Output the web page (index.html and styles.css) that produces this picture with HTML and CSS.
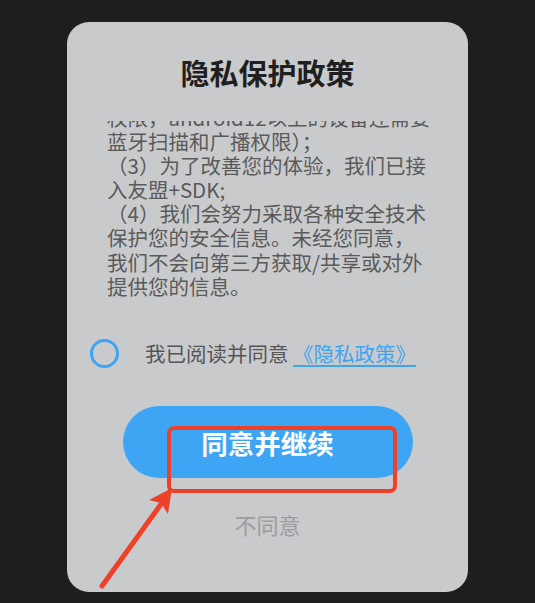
FILE: index.html
```html
<!DOCTYPE html>
<html lang="zh-CN">
<head>
<meta charset="utf-8">
<title>隐私保护政策</title>
<link rel="stylesheet" href="styles.css">
</head>
<body>
<div class="screen">
  <div class="card">
    <h1 class="title">隐私保护政策</h1>
    <div class="policy-scroll">
      <div class="policy-text">
        <p>权限，android12以上的设备还需要<br>蓝牙扫描和广播权限）；</p>
        <p>（3）为了改善您的体验，我们已接<br>入友盟+SDK;</p>
        <p>（4）我们会努力采取各种安全技术<br>保护您的安全信息。未经您同意，<br>我们不会向第三方获取/共享或对外<br>提供您的信息。</p>
      </div>
    </div>
    <div class="agree-row">
      <span class="check"></span>
      <span class="agree-label">我已阅读并同意 <a class="agree-link" href="#">《隐私政策》</a></span>
    </div>
    <button class="btn-primary">同意并继续</button>
    <div class="btn-secondary">不同意</div>
  </div>
  <svg class="annotation" width="535" height="603" viewBox="0 0 535 603">
    <rect x="169" y="428" width="226" height="63" rx="5" ry="5" fill="none" stroke="#ee4129" stroke-width="4"/>
    <line x1="102" y1="586" x2="164" y2="500" stroke="#ee4129" stroke-width="5" stroke-linecap="round"/>
    <polygon points="172,488 149,500 161,503 168,514" fill="#ee4129"/>
  </svg>
</div>
</body>
</html>
```

FILE: styles.css
```css
html, body {
  margin: 0;
  padding: 0;
  background: #1e1e1e;
}
.screen {
  position: relative;
  width: 535px;
  height: 603px;
  overflow: hidden;
  padding-top: 22px;
  box-sizing: border-box;
}
.card {
  margin-left: 67px;
  width: 401px;
  height: 570px;
  border-radius: 22px;
  background: #c9cacc;
  padding-top: 32px;
  box-sizing: border-box;
  display: flex;
  flex-direction: column;
  font-family: "Noto Sans CJK SC", "Noto Sans", sans-serif;
}
.title {
  margin: 0;
  text-align: center;
  font-size: 29px;
  line-height: 36px;
  font-weight: 700;
  color: #1f1f1f;
}
.policy-scroll {
  margin-top: 31px;
  height: 197px;
  overflow: hidden;
  padding-left: 40px;
}
.policy-text {
  margin-top: -16px;
  font-size: 20.5px;
  line-height: 24.1px;
  color: #5a5a5a;
}
.policy-text p {
  margin: 0;
  white-space: nowrap;
}
.agree-row {
  margin-top: 20px;
  height: 30px;
  display: flex;
  align-items: center;
  padding-left: 23px;
}
.check {
  width: 29px;
  height: 29px;
  box-sizing: border-box;
  border: 3px solid #3ea4f2;
  border-radius: 50%;
  flex: none;
}
.agree-label {
  margin-left: 26px;
  font-size: 20.5px;
  line-height: 30px;
  color: #555;
  white-space: nowrap;
}
.agree-link {
  color: #3ea4f2;
  text-decoration: underline;
  text-underline-offset: 3px;
}
.btn-primary {
  margin: 38px auto 0;
  width: 290px;
  height: 72px;
  border: none;
  border-radius: 36px;
  background: #3ea5f4;
  color: #fff;
  font-family: "Noto Sans CJK SC", "Noto Sans", sans-serif;
  font-size: 26.5px;
  font-weight: 700;
  padding: 0;
}
.btn-secondary {
  margin-top: 31px;
  text-align: center;
  font-size: 22px;
  line-height: 30px;
  color: #9d9d9d;
}
.annotation {
  position: absolute;
  left: 0;
  top: 0;
  pointer-events: none;
}
```
